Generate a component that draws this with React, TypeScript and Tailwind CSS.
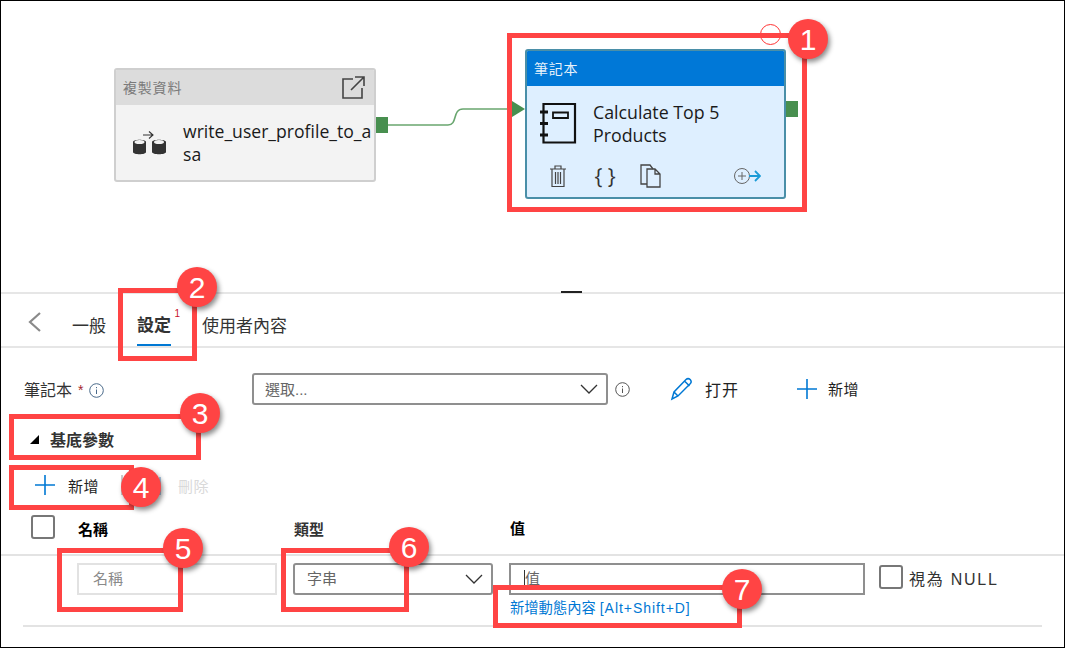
const latin = "font-['Open_Sans','Noto_Sans_CJK_TC',sans-serif]";

function Marker({ n, className }: { n: number; className: string }) {
  return (
    <div
      className={`absolute flex h-10 w-10 items-center justify-center rounded-full bg-[#ff4444] font-['Liberation_Sans',sans-serif] text-[30px] text-white shadow-[2px_3px_5px_rgba(0,0,0,0.45)] ${className}`}
    >
      {n}
    </div>
  );
}

function Plus({ size = 20 }: { size?: number }) {
  return (
    <svg width={size} height={size} viewBox="0 0 20 20" fill="none" stroke="#0078d4" strokeWidth="1.6">
      <path d="M10 0v20M0 10h20" />
    </svg>
  );
}

function Chevron() {
  return (
    <svg width="18" height="10" viewBox="0 0 18 10" fill="none" stroke="#333" strokeWidth="1.3">
      <path d="M1 1l8 8 8-8" />
    </svg>
  );
}

function InfoIcon({ color = "#555" }: { color?: string }) {
  return (
    <svg width="15" height="15" viewBox="0 0 15 15" fill="none" stroke={color} strokeWidth="1">
      <circle cx="7.5" cy="7.5" r="6.8" />
      <path d="M7.5 6.5v4.5M7.5 4v1.2" />
    </svg>
  );
}

function Canvas() {
  return (
    <div className="relative h-[292px]">
      <svg className="absolute left-[388px] top-[100px]" width="130" height="30" viewBox="0 0 130 30" fill="none" stroke="#69a66f" strokeWidth="1.6">
        <path d="M0 25H60C70 25 64 9 75 9H125" />
      </svg>

      {/* copy activity */}
      <div className="absolute left-[114px] top-[68px] flex h-[114px] w-[262px] flex-col overflow-hidden rounded-[3px] border-2 border-[#cfcfcf] bg-[#f3f3f3]">
        <div className="flex h-[35px] shrink-0 items-center justify-between bg-[#dcdcdc] pl-[7px] pr-[8px]">
          <span className="mt-[2px] text-[14px] tracking-[0.8px] text-[#7a7a7a]">複製資料</span>
          <svg width="25" height="25" viewBox="0 0 25 25" fill="none" stroke="#444" strokeWidth="1.6">
            <path d="M12 4H2v19h19V13M10 15L23 2M14 2h9v9" />
          </svg>
        </div>
        <div className="flex flex-1 pl-[16px] pt-[15px]">
          <svg className="mt-[11px] shrink-0" width="36" height="24" viewBox="0 0 36 24" fill="#333">
            <path d="M1 11c0-3 13-3 13 0v10c0 3-13 3-13 0z" />
            <path d="M20 11c0-3 14-3 14 0v10c0 3-14 3-14 0z" />
            <ellipse cx="7.5" cy="11" rx="5" ry="2" fill="#f3f3f3" />
            <ellipse cx="27" cy="11" rx="5" ry="2" fill="#f3f3f3" />
            <path d="M11 4h10M17 0.5L21 4l-4 3.5" fill="none" stroke="#333" strokeWidth="1.1" />
          </svg>
          <div className={`ml-[15px] w-[195px] text-[17.6px] leading-[23px] text-[#1a1a1a] ${latin}`}>
            write_user_profile_to_a
            <br />
            sa
          </div>
        </div>
      </div>
      <div className="absolute left-[376px] top-[117px] h-4 w-3 bg-[#488f4f]" />

      {/* notebook activity */}
      <div className="absolute left-[512px] top-[101px] h-0 w-0 border-y-8 border-l-[13px] border-y-transparent border-l-[#488f4f]" />
      <div className="absolute left-[525px] top-[49px] flex h-[150px] w-[261px] flex-col overflow-hidden rounded-[3px] border-2 border-[#4a8fa8] bg-[#deefff]">
        <div className="flex h-[35px] shrink-0 items-center bg-[#0078d7] pl-[7px] text-[14px] tracking-[0.8px] text-[#e8f2fb]">
          <span className="mt-[2px]">筆記本</span>
        </div>
        <div className="flex pl-[12px] pt-[16px]">
          <svg className="shrink-0" width="38" height="42" viewBox="0 0 38 42" fill="none" stroke="#111">
            <path d="M4.500 2H36V40.500H4.500z" strokeWidth="2.200" />
            <path d="M1 10h8M1 21.500h8M1 33h8" strokeWidth="3" />
            <path d="M14 10.500H29V16H14z" strokeWidth="1.800" />
          </svg>
          <div className={`ml-[16px] -mt-[1px] text-[17.8px] leading-[23px] text-[#1a1a1a] ${latin}`}>
            Calculate Top 5
            <br />
            Products
          </div>
        </div>
        <div className="mt-[17px] flex items-center pl-[22px]">
          <svg width="18" height="24" viewBox="0 0 18 24" fill="none" stroke="#444" strokeWidth="1.200">
            <path d="M1 5h16M3 5v17.500h12V5M6 5V2h6v3M6.500 8v12M9 8v12M11.500 8v12" />
          </svg>
          <span className={`ml-[27px] w-[22px] text-center text-[21px] leading-none text-[#333] ${latin}`}>{"{ }"}</span>
          <svg className="ml-[24px]" width="21" height="24" viewBox="0 0 21 24" fill="none" stroke="#444" strokeWidth="1.300">
            <path d="M7 20H1V1h9l3 4" />
            <path d="M7 5h8l5 5v13H7zM15 5v5h5" />
          </svg>
          <svg className="ml-[72px]" width="28" height="18" viewBox="0 0 28 18" fill="none">
            <circle cx="9" cy="9" r="7.500" stroke="#666" strokeWidth="1" />
            <path d="M5 9h8M9 5v8" stroke="#666" strokeWidth="1" />
            <path d="M16 9h11M22 4l5 5-5 5" stroke="#1a9bd7" strokeWidth="1.800" />
          </svg>
        </div>
      </div>
      <div className="absolute left-[786px] top-[101px] h-4 w-3 bg-[#488f4f]" />
    </div>
  );
}

function Tabs() {
  return (
    <div className="relative flex h-[56px] items-center border-y-2 border-[#e6e6e6] text-[#333]">
      <svg className="ml-[28px] mt-[4px]" width="14" height="20" viewBox="0 0 14 20" fill="none" stroke="#8a8a8a" strokeWidth="2.200">
        <path d="M12 1L2 10l10 9" />
      </svg>
      <span className="ml-[30px] mt-[14px] text-[17px]">一般</span>
      <span className="relative ml-[31px] flex h-full items-center border-b-2 border-[#0078d4] pt-[14px] text-[17px] font-bold">
        設定
        <span className="absolute -right-[9px] top-[12px] font-['Liberation_Sans',sans-serif] text-[10px] font-normal text-[#c8102e]">1</span>
      </span>
      <span className="ml-[31px] mt-[14px] text-[17px]">使用者內容</span>
    </div>
  );
}

function Form() {
  return (
    <div className="flex flex-col">
      <div className="mt-[25px] flex h-[32px] items-center">
        <div className="ml-[24px] mt-[3px] flex w-[228px] items-center text-[16px] text-[#333]">
          筆記本
          <span className="ml-[6px] text-[14px] text-[#a4262c]">*</span>
          <span className="ml-[6px]"><InfoIcon color="#4a6a8a" /></span>
        </div>
        <div className="flex h-[32px] w-[356px] items-center justify-between rounded-[3px] border-2 border-[#8f8f8f] pl-[11px] pr-[8px] text-[15px] text-[#666]">
          <span className="mt-[2px]">選取...</span>
          <Chevron />
        </div>
        <span className="ml-[7px]"><InfoIcon /></span>
        <svg className="ml-[40px]" width="23" height="24" viewBox="0 0 23 24" fill="none" stroke="#0078d4" strokeWidth="1.500">
          <path d="M2 22l2-7L16 2.500c1.500-1.300 3-1 4.200 0 1 1.200 1.300 3 0 4.300L8 19zM4 15l4 4M14.500 4l5 5" />
        </svg>
        <span className="ml-[12px] mt-[3px] text-[16px] tracking-[1px] text-[#222]">打开</span>
        <span className="ml-[58px]"><Plus /></span>
        <span className="ml-[11px] mt-[3px] text-[15px] tracking-[0.5px] text-[#222]">新增</span>
      </div>

      <div className="mt-[22px] flex h-[24px] items-center">
        <span className="ml-[30px] h-0 w-0 border-b-[9px] border-l-[9px] border-b-black border-l-transparent" />
        <span className="ml-[11px] mt-[3px] text-[16px] font-bold text-[#333]">基底參數</span>
      </div>

      <div className="mt-[22px] flex h-[24px] items-center">
        <span className="ml-[35px]"><Plus /></span>
        <span className="ml-[13px] mt-[5px] text-[15px] tracking-[0.5px] text-[#222]">新增</span>
        <svg className="ml-[22px]" width="40" height="24" viewBox="0 0 40 24" fill="none" strokeWidth="1.400">
          <path d="M1 2v20" stroke="#b5b5b5" />
          <path d="M39 4v18" stroke="#8fb4d8" />
        </svg>
        <span className="ml-[17px] mt-[5px] text-[15px] tracking-[0.5px] text-[#d9d9d9]">刪除</span>
      </div>

      <div className="mt-[18px] flex h-[41px] items-start border-b-2 border-[#e3e3e3]">
        <span className="ml-[31px] h-[24px] w-[24px] rounded-[3px] border-2 border-[#777]" />
        <span className="ml-[23px] mt-[4px] w-[216px] text-[15px] font-bold text-black">名稱</span>
        <span className="mt-[4px] w-[216px] text-[15px] font-bold text-[#333]">類型</span>
        <span className="mt-[3px] text-[15px] font-bold text-black">值</span>
      </div>

      <div className="mx-[23px] flex h-[71px] items-start border-b-2 border-[#e3e3e3] pt-[7px]">
        <div className="ml-[54px] flex h-[32px] w-[200px] items-center border-2 border-[#e2e2e2] pl-[14px] text-[15px] text-[#8a8a8a]">
          <span className="mt-[1px]">名稱</span>
        </div>
        <div className="ml-[16px] flex h-[32px] w-[200px] items-center justify-between rounded-[3px] border-2 border-[#8f8f8f] pl-[12px] pr-[8px] text-[15px] text-[#666]">
          <span className="mt-[1px]">字串</span>
          <Chevron />
        </div>
        <div className="ml-[16px] flex flex-col">
          <div className="flex h-[32px] w-[356px] items-center border-2 border-[#8f8f8f] pl-[13px] text-[15px] text-[#666]">
            <span className="h-[18px] w-px bg-[#333]" />
            <span className="mt-[1px]">值</span>
          </div>
          <span className="ml-[1px] mt-[5px] text-[14.300px] leading-[16px] text-[#0078d4]">
            新增動態內容 <span className="text-[14px] tracking-[0.95px]">[Alt+Shift+D]</span>
          </span>
        </div>
        <span className="ml-[14px] mt-[2px] h-[24px] w-[24px] rounded-[3px] border-2 border-[#777]" />
        <span className="ml-[6px] mt-[5px] text-[16px] tracking-[1.750px] text-[#333]">視為 NULL</span>
      </div>
    </div>
  );
}

export default function App() {
  return (
    <div className="relative h-[648px] w-[1065px] overflow-hidden bg-white font-['Liberation_Sans','Noto_Sans_CJK_TC',sans-serif]">
      <Canvas />
      <Tabs />
      <Form />

      <div className="absolute left-[561px] top-[291px] h-[2px] w-[21px] bg-[#222]" />

      {/* annotation overlays */}
      <div className="absolute left-[760px] top-[24px] h-[21px] w-[21px] rounded-full border border-[#ff3333]" />
      <div className="absolute left-[507px] top-[33px] h-[179px] w-[300px] border-[5px] border-[#ff4444]" />
      <div className="absolute left-[118px] top-[288px] h-[73px] w-[79px] border-[5px] border-[#ff4444]" />
      <div className="absolute left-[9px] top-[414px] h-[46px] w-[192px] border-[5px] border-[#ff4444]" />
      <div className="absolute left-[9px] top-[465px] h-[45px] w-[125px] border-[5px] border-[#ff4444]" />
      <div className="absolute left-[57px] top-[548px] h-[64px] w-[126px] border-[5px] border-[#ff4444]" />
      <div className="absolute left-[281px] top-[548px] h-[64px] w-[128px] border-[5px] border-[#ff4444]" />
      <div className="absolute left-[493px] top-[585px] h-[43px] w-[249px] border-[5px] border-[#ff4444]" />
      <Marker n={1} className="left-[788px] top-[19px]" />
      <Marker n={2} className="left-[177px] top-[267px]" />
      <Marker n={3} className="left-[180px] top-[393px]" />
      <Marker n={4} className="left-[121px] top-[467px]" />
      <Marker n={5} className="left-[163px] top-[528px]" />
      <Marker n={6} className="left-[389px] top-[527px]" />
      <Marker n={7} className="left-[722px] top-[569px]" />

      <div className="pointer-events-none absolute inset-0 border border-black" />
    </div>
  );
}
